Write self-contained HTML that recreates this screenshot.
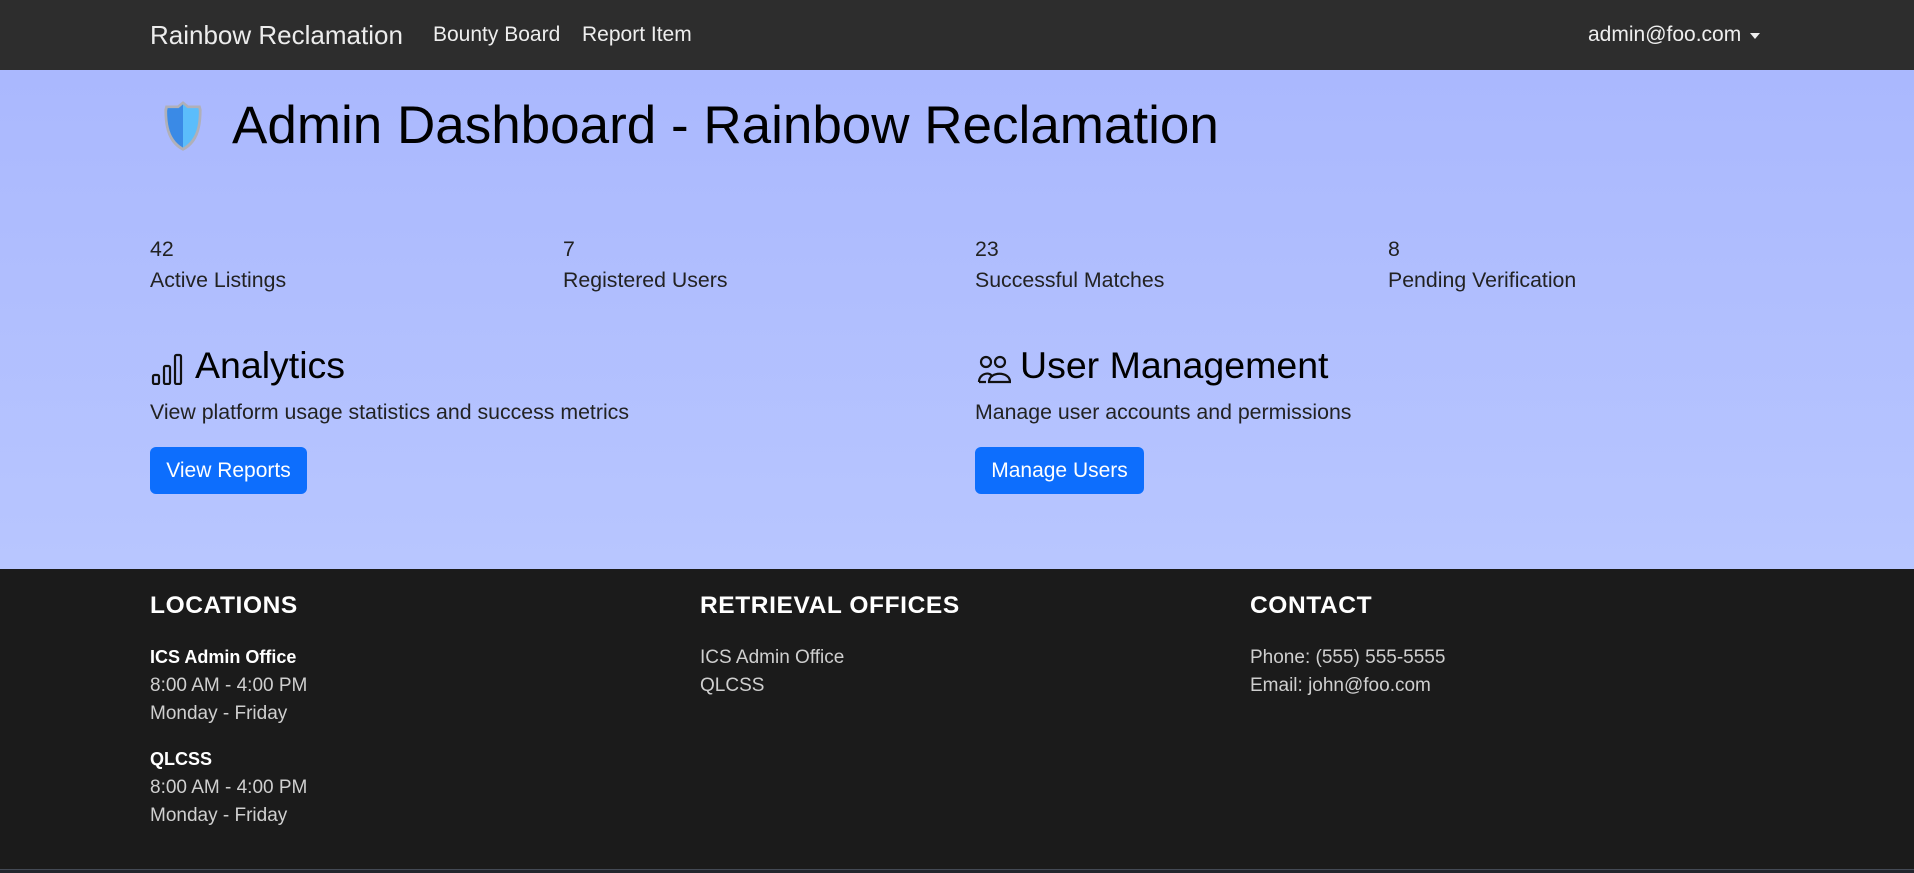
<!DOCTYPE html>
<html><head><meta charset="utf-8"><style>
*{margin:0;padding:0;box-sizing:border-box}
body{width:1914px;height:873px;overflow:hidden;font-family:"Liberation Sans",Arial,sans-serif;background:#1b1b1b;position:relative}
.a{position:absolute;white-space:nowrap}
nav{position:absolute;left:0;top:0;width:1914px;height:70px;background:#2d2d2d}
.hero{position:absolute;left:0;top:70px;width:1914px;height:499px;background:linear-gradient(#aab8fe,#b8c6ff)}
.foot{position:absolute;left:0;top:569px;width:1914px;height:300px;background:#1b1b1b}
.btn{position:absolute;background:#0d6efd;color:#fff;border-radius:6px;font-size:21px;display:flex;align-items:center;justify-content:center}
.h{font-weight:bold;font-size:24.5px;color:#fff;letter-spacing:0.6px}
.f{font-size:19px;color:#cfcfcf}
.s{font-size:21.3px;color:#222}
</style></head><body>
<nav>
<div class="a" style="left:150px;top:20px;font-size:26px;color:#ececec">Rainbow Reclamation</div>
<div class="a" style="left:433px;top:23px;font-size:21px;color:#eee">Bounty Board</div>
<div class="a" style="left:582px;top:23px;font-size:21px;color:#eee">Report Item</div>
<div class="a" style="left:1588px;top:23px;font-size:21px;color:#eee">admin@foo.com</div>
<div class="a" style="left:1750px;top:33px;width:0;height:0;border-left:5px solid transparent;border-right:5px solid transparent;border-top:6px solid #eee"></div>
</nav>
<div class="hero"></div>
<svg class="a" style="left:160px;top:99px" width="46" height="54" viewBox="0 0 42 50" preserveAspectRatio="none">
<path d="M21 2 L26 6 L37 6 L38 10 C38 30 33 42 21 48 C9 42 4 30 4 10 L5 6 L16 6 Z" fill="#b0b0b8" />
<path d="M21 5 L25 8.5 L35 8.5 L35.5 11 C35.5 29 31 39 21 45 Z" fill="#5bbdfb"/>
<path d="M21 5 L17 8.5 L7 8.5 L6.5 11 C6.5 29 11 39 21 45 Z" fill="#3a8ae6"/>
</svg>
<div class="a" style="left:232px;top:95px;font-size:53px;color:#000">Admin Dashboard - Rainbow Reclamation</div>
<div class="a s" style="left:150px;top:237px">42</div><div class="a s" style="left:150px;top:268px">Active Listings</div>
<div class="a s" style="left:563px;top:237px">7</div><div class="a s" style="left:563px;top:268px">Registered Users</div>
<div class="a s" style="left:975px;top:237px">23</div><div class="a s" style="left:975px;top:268px">Successful Matches</div>
<div class="a s" style="left:1388px;top:237px">8</div><div class="a s" style="left:1388px;top:268px">Pending Verification</div>
<svg class="a" style="left:151px;top:353px" width="33" height="32" viewBox="0 0 33 32" fill="none" stroke="#111" stroke-width="2.2">
<rect x="2" y="22" width="6" height="9" rx="1.5"/><rect x="13" y="13" width="6" height="18" rx="1.5"/><rect x="24" y="2" width="6" height="29" rx="1.5"/>
</svg>
<div class="a" style="left:195px;top:344px;font-size:37.5px;color:#000">Analytics</div>
<svg class="a" style="left:977px;top:355px" width="34" height="29" viewBox="0 0 34 29" fill="none" stroke="#111" stroke-width="2.2">
<circle cx="9" cy="7" r="5"/><circle cx="23" cy="7" r="5"/>
<path d="M2 27 C2 18 14 16 15 22 M9 27 L2 27"/><path d="M12 27 C12 16 33 16 33 27 Z"/>
</svg>
<div class="a" style="left:1020px;top:344px;font-size:37.5px;color:#000">User Management</div>
<div class="a s" style="left:150px;top:400px">View platform usage statistics and success metrics</div>
<div class="a s" style="left:975px;top:400px">Manage user accounts and permissions</div>
<div class="btn" style="left:150px;top:447px;width:157px;height:47px">View Reports</div>
<div class="btn" style="left:975px;top:447px;width:169px;height:47px">Manage Users</div>
<div class="foot"></div>
<div class="a h" style="left:150px;top:592px">LOCATIONS</div>
<div class="a h" style="left:700px;top:592px">RETRIEVAL OFFICES</div>
<div class="a h" style="left:1250px;top:592px">CONTACT</div>
<div class="a f" style="left:150px;top:647px;color:#fff;font-weight:bold;font-size:18px">ICS Admin Office</div>
<div class="a f" style="left:150px;top:675px">8:00 AM - 4:00 PM</div>
<div class="a f" style="left:150px;top:703px">Monday - Friday</div>
<div class="a f" style="left:150px;top:749px;color:#fff;font-weight:bold;font-size:18px">QLCSS</div>
<div class="a f" style="left:150px;top:777px">8:00 AM - 4:00 PM</div>
<div class="a f" style="left:150px;top:805px">Monday - Friday</div>
<div class="a f" style="left:700px;top:647px">ICS Admin Office</div>
<div class="a f" style="left:700px;top:675px">QLCSS</div>
<div class="a f" style="left:1250px;top:647px">Phone: (555) 555-5555</div>
<div class="a f" style="left:1250px;top:675px">Email: john@foo.com</div>
<div class="a" style="left:0;top:869px;width:1914px;height:1px;background:#444a55"></div>
<div class="a" style="left:0;top:870px;width:1914px;height:3px;background:#22252c"></div>
</body></html>
